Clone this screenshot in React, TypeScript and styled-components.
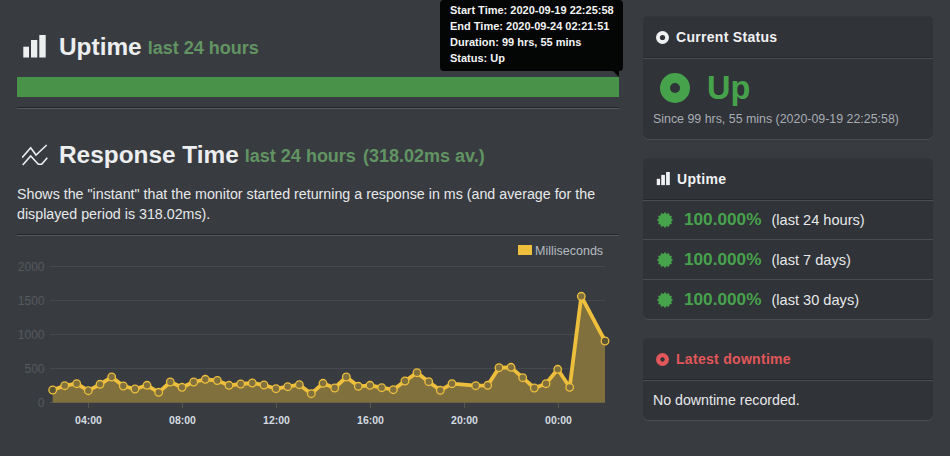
import type { ReactNode } from 'react'
import styled, { createGlobalStyle } from 'styled-components'

const GlobalStyle = createGlobalStyle`
  html, body {
    margin: 0;
    padding: 0;
    background: #383c40;
    font-family: 'Liberation Sans', Arial, sans-serif;
    color: #e8eaec;
    overflow: hidden;
  }
`

const GREEN = '#46a34b'
const MUTED_GREEN = '#629463'
const YELLOW = '#eebf3d'
const RED = '#e2575a'

const Page = styled.div`
  display: flex;
  align-items: flex-start;
  gap: 24px;
  width: 950px;
  height: 456px;
  box-sizing: border-box;
  padding: 17px 18px 0 17px;
  overflow: hidden;
`

const Main = styled.main`
  width: 602px;
  flex: none;
`

const Side = styled.aside`
  display: flex;
  flex-direction: column;
  gap: 20px;
  width: 290px;
  flex: none;
`

const Heading = styled.h2<{ $top: number }>`
  display: flex;
  align-items: center;
  height: 34px;
  margin: ${(p) => p.$top}px 0 0;
  font-size: 24.4px;
  font-weight: 700;
  color: #eceef0;
  white-space: nowrap;

  small {
    margin-left: 6px;
    padding-top: 3px;
    font-size: 18px;
    font-weight: 700;
    color: ${MUTED_GREEN};
  }

  small span {
    margin-left: 2px;
  }
`

const HeadingIcon = styled.span`
  display: flex;
  flex: none;
  width: 37px;
  padding-left: 5px;
`

const BarWrap = styled.div`
  position: relative;
  margin-top: 13px;
`

const UptimeBar = styled.div`
  height: 20px;
  background: #49924a;
`

const Tooltip = styled.div`
  position: absolute;
  right: -4px;
  bottom: 26px;
  width: 173px;
  padding: 2px 0 5px 10px;
  background: #040505;
  border-radius: 4px;
  font-size: 11px;
  font-weight: 700;
  line-height: 16px;
  color: #f2f3f4;
  white-space: nowrap;

  &::after {
    content: '';
    position: absolute;
    right: 4px;
    top: 100%;
    border-style: solid;
    border-width: 0 6px 6px 0;
    border-color: transparent #040505 transparent transparent;
  }
`

const Rule = styled.hr<{ $top: number }>`
  height: 1px;
  margin: ${(p) => p.$top}px 0 0;
  border: 0;
  background: #232629;
  box-shadow: 0 1px 0 #55585c;
`

const Description = styled.p`
  margin: 12px 0 0;
  font-size: 14.25px;
  line-height: 20px;
  color: #e6e8ea;
`

const Chart = styled.svg`
  display: block;
  width: 602px;
  height: 220px;

  text {
    font-family: 'Liberation Sans', Arial, sans-serif;
  }
`

const Panel = styled.section`
  background: #303338;
  border-radius: 5px;
  box-shadow: 0 1px 0 #494c50, 0 -1px 0 #33363a;
`

const PanelHeader = styled.header<{ $red?: boolean }>`
  display: flex;
  align-items: center;
  gap: 7px;
  height: 40px;
  padding: 0 0 0 13px;
  border-bottom: 1px solid #25282b;
  box-shadow: 0 1px 0 #4a4d51;
  font-size: 14px;
  font-weight: 700;
  letter-spacing: 0.3px;
  color: ${(p) => (p.$red ? RED : '#f0f1f3')};
`

const StatusBody = styled.div`
  padding: 15px 10px 0;
  height: 66px;
`

const StatusLine = styled.div`
  display: flex;
  align-items: center;
  gap: 17px;
  height: 30px;
  padding-left: 7px;
  font-size: 32.5px;
  font-weight: 700;
  color: ${GREEN};
`

const Since = styled.div`
  margin-top: 8px;
  font-size: 12.4px;
  line-height: 16px;
  color: #a8adb3;
  white-space: nowrap;
`

const UptimeRow = styled.div`
  display: flex;
  align-items: center;
  height: 39px;
  padding-left: 14px;

  & + & {
    border-top: 1px solid #484b4f;
  }
`

const Percent = styled.strong`
  margin: 0 10px 0 11px;
  font-size: 17.2px;
  color: ${GREEN};
`

const Period = styled.span`
  font-size: 14.6px;
  color: #e6e8ea;
`

const PlainBody = styled.div`
  display: flex;
  align-items: center;
  height: 40px;
  padding-left: 10px;
  font-size: 14.2px;
  color: #e6e8ea;
`

const BarsIcon = ({ size }: { size: number }) => (
  <svg width={size} height={size} viewBox="0 0 24 24" fill="currentColor" style={{ flex: 'none' }}>
    <rect x="1.3" y="11.7" width="5.7" height="10.8" />
    <rect x="9" y="5" width="6.3" height="17.5" />
    <rect x="17.3" y="0" width="6.4" height="22.5" />
  </svg>
)

const TrendIcon = () => (
  <svg width="26" height="22" viewBox="0 0 26 22" fill="none" stroke="#eceef0" strokeWidth="1.6">
    <path d="M0 13.7 L8.7 3.7 L14 11 L24.7 1" />
    <path d="M0.7 21 L8.7 12 L16.3 20.3 L19.7 20.3 L25.3 13.7" />
  </svg>
)

const RingIcon = ({ size, hole, color, holeColor }: { size: number; hole: number; color: string; holeColor: string }) => (
  <svg width={size} height={size} viewBox="0 0 30 30" style={{ flex: 'none' }}>
    <circle cx="15" cy="15" r="15" fill={color} />
    <circle cx="15" cy="15" r={hole} fill={holeColor} />
  </svg>
)

const burstPoints = Array.from({ length: 24 }, (_, i) => {
  const radius = i % 2 === 0 ? 8 : 6.3
  const angle = (i / 24) * Math.PI * 2
  return `${(8 + radius * Math.cos(angle)).toFixed(2)},${(8 + radius * Math.sin(angle)).toFixed(2)}`
}).join(' ')

const BurstIcon = () => (
  <svg width="16" height="16" viewBox="0 0 16 16" style={{ flex: 'none' }}>
    <polygon points={burstPoints} fill={GREEN} />
  </svg>
)

// chart coordinates are page pixels, the viewBox shifts them into place
const points: [number, number][] = [
  [52.7, 390], [64.7, 385.7], [76.7, 383.7], [88.3, 390.7], [100, 384.3], [111.7, 377], [123.3, 386], [135, 389],
  [147, 385.3], [158.7, 392.3], [170.3, 382], [182, 387.3], [193.7, 382], [205.3, 379.3], [217.3, 380.5],
  [229, 385.3], [240.7, 384], [252.3, 383], [264, 385], [276, 388.7], [287.7, 386.7], [299.3, 384.7], [311.3, 393.7],
  [323, 383.3], [334.7, 388], [346.3, 377], [358.3, 386.3], [370, 385.3], [381.7, 387.7], [393.3, 389.7], [405, 381],
  [417, 372.7], [428.7, 381.7], [440.3, 390.3], [452, 383.7], [475.7, 385.7], [487.7, 385.3], [499, 367.7], [511, 367.3],
  [522.7, 377.7], [534.3, 388], [546, 383.7], [557.7, 369.3], [569.7, 387.3], [581.3, 296.3], [605, 341],
]

const gridLines = [
  { y: 266.5, label: '2000' },
  { y: 300.5, label: '1500' },
  { y: 334.5, label: '1000' },
  { y: 368.5, label: '500' },
  { y: 402.5, label: '0' },
]

const ticks = [
  { x: 88.5, label: '04:00' },
  { x: 182.5, label: '08:00' },
  { x: 276.5, label: '12:00' },
  { x: 370.5, label: '16:00' },
  { x: 464.5, label: '20:00' },
  { x: 558.5, label: '00:00' },
]

const ResponseChart = () => {
  const line = points.map(([x, y]) => `${x},${y}`).join(' ')
  return (
    <Chart viewBox="17 235 602 220">
      {gridLines.map((g) => (
        <g key={g.label}>
          <line x1="50" x2="605" y1={g.y} y2={g.y} stroke={g.label === '0' ? '#54554a' : '#45494d'} />
          <text x="44.5" y={g.y + 4.5} textAnchor="end" fontSize="12" fill="#56595d">
            {g.label}
          </text>
        </g>
      ))}
      {ticks.map((t) => (
        <g key={t.label}>
          <line x1={t.x} x2={t.x} y1="403" y2="408" stroke="#54574f" />
          <text x={t.x} y="424" textAnchor="middle" fontSize="10.5" fontWeight="700" fill="#d5dbe2">
            {t.label}
          </text>
        </g>
      ))}
      <rect x="518" y="245" width="14" height="10" fill={YELLOW} />
      <text x="535" y="255" fontSize="12.5" fill="#b4bac1">
        Milliseconds
      </text>
      <polygon points={`52.7,402.5 ${line} 605,402.5`} fill="#7f703e" />
      <polyline points={line} fill="none" stroke={YELLOW} strokeWidth="3.8" strokeLinejoin="round" />
      {points.map(([x, y], i) => (
        <circle
          key={x}
          cx={x}
          cy={y}
          r="3.8"
          fill={i === 0 || i === points.length - 1 ? '#5d5433' : '#7f703e'}
          stroke={YELLOW}
          strokeWidth="1.3"
        />
      ))}
    </Chart>
  )
}

const rows = ['last 24 hours', 'last 7 days', 'last 30 days']

const PageHeading = ({ top, icon, children }: { top: number; icon: ReactNode; children: ReactNode }) => (
  <Heading $top={top}>
    <HeadingIcon>{icon}</HeadingIcon>
    {children}
  </Heading>
)

export default function App() {
  return (
    <Page>
      <GlobalStyle />
      <Main>
        <PageHeading top={13} icon={<BarsIcon size={24} />}>
          Uptime
          <small>last 24 hours</small>
        </PageHeading>
        <BarWrap>
          <UptimeBar />
          <Tooltip>
            Start Time: 2020-09-19 22:25:58
            <br />
            End Time: 2020-09-24 02:21:51
            <br />
            Duration: 99 hrs, 55 mins
            <br />
            Status: Up
          </Tooltip>
        </BarWrap>
        <Rule $top={10} />
        <PageHeading top={30} icon={<TrendIcon />}>
          Response Time
          <small>
            last 24 hours <span>(318.02ms av.)</span>
          </small>
        </PageHeading>
        <Description>
          Shows the "instant" that the monitor started returning a response in ms (and average for the displayed period
          is 318.02ms).
        </Description>
        <Rule $top={10} />
        <ResponseChart />
      </Main>
      <Side>
        <Panel>
          <PanelHeader>
            <RingIcon size={13} hole={6} color="#f0f1f3" holeColor="#303338" />
            Current Status
          </PanelHeader>
          <StatusBody>
            <StatusLine>
              <RingIcon size={30} hole={5} color={GREEN} holeColor="#303338" />
              Up
            </StatusLine>
            <Since>Since 99 hrs, 55 mins (2020-09-19 22:25:58)</Since>
          </StatusBody>
        </Panel>
        <Panel>
          <PanelHeader>
            <BarsIcon size={14} />
            Uptime
          </PanelHeader>
          {rows.map((r) => (
            <UptimeRow key={r}>
              <BurstIcon />
              <Percent>100.000%</Percent>
              <Period>({r})</Period>
            </UptimeRow>
          ))}
        </Panel>
        <Panel>
          <PanelHeader $red>
            <RingIcon size={13} hole={5} color={RED} holeColor="#303338" />
            Latest downtime
          </PanelHeader>
          <PlainBody>No downtime recorded.</PlainBody>
        </Panel>
      </Side>
    </Page>
  )
}
